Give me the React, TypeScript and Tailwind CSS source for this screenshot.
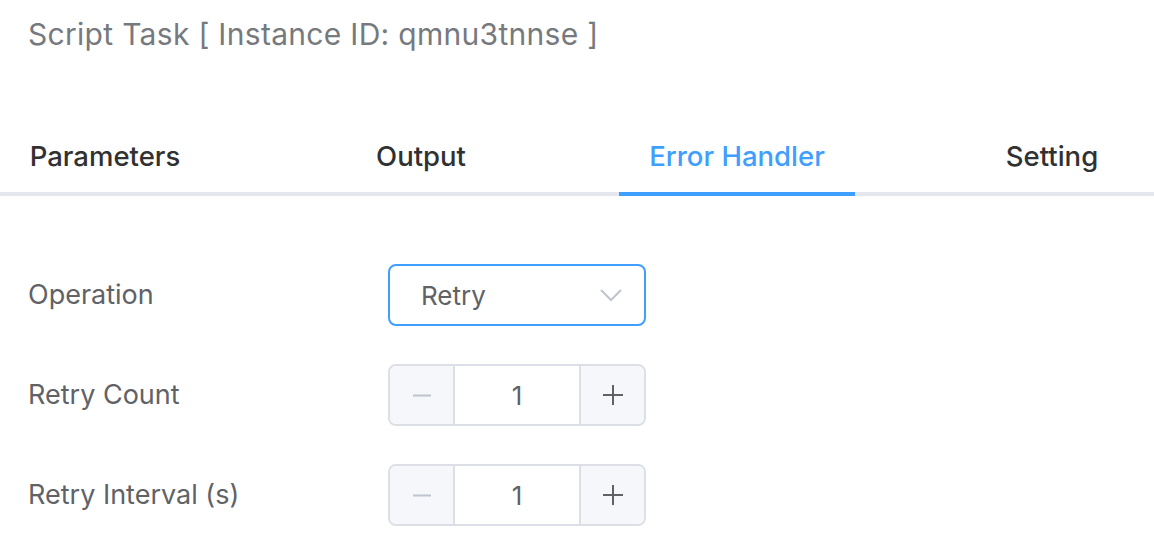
import React from "react";

const font = { fontFamily: "Inter, 'Noto Sans', sans-serif" };

function Tabs() {
  const tabs = [
    { label: "Parameters", w: "w-[210px]", ml: "ml-0" },
    { label: "Output", w: "w-[236px]", ml: "ml-[93px]" },
    { label: "Error Handler", w: "w-[236px]", ml: "ml-[80px]", active: true },
    { label: "Setting", w: "w-[204px]", ml: "ml-[95px]" },
  ];
  return (
    <div className="flex border-b-4 border-[#e4e7ed]">
      {tabs.map((t) => (
        <div
          key={t.label}
          className={`${t.w} ${t.ml} relative flex h-[70px] items-center justify-center text-[27.5px] font-medium ${
            t.active ? "text-[#409eff]" : "text-[#303133]"
          }`}
        >
          {t.label}
          {t.active && <div className="absolute -bottom-[4px] left-0 right-0 h-[4px] bg-[#409eff]" />}
        </div>
      ))}
    </div>
  );
}

function NumberInput() {
  return (
    <div className="flex h-[62px] w-[258px] overflow-hidden rounded-[8px] border-2 border-[#dcdfe6]">
      <div className="flex w-[65px] items-center justify-center border-r-2 border-[#dcdfe6] bg-[#f5f7fa]">
        <svg width="20" height="20" viewBox="0 0 20 20">
          <path d="M1 10.5h18" stroke="#c0c4cc" strokeWidth="2" />
        </svg>
      </div>
      <div className="flex flex-1 items-center justify-center text-[26px] text-[#606266]">1</div>
      <div className="flex w-[65px] items-center justify-center border-l-2 border-[#dcdfe6] bg-[#f5f7fa]">
        <svg width="22" height="22" viewBox="0 0 22 22">
          <path d="M1 11h20M11 1v20" stroke="#606266" strokeWidth="2" />
        </svg>
      </div>
    </div>
  );
}

function Row({ label, children }: { label: string; children: React.ReactNode }) {
  return (
    <div className="flex h-[62px] items-center">
      <div className="w-[388px] pl-[28px] text-[27px] text-[#606266]">{label}</div>
      {children}
    </div>
  );
}

export default function App() {
  return (
    <div className="h-[544px] w-[1154px] overflow-hidden bg-white" style={font}>
      <div className="pl-[28px] pt-[14px] text-[30px] leading-[40px] tracking-[0.3px] text-[#76797e]">
        Script Task [ Instance ID: qmnu3tnnse ]
      </div>
      <div className="mt-[68px]">
        <Tabs />
      </div>
      <div className="mt-[68px] flex flex-col gap-[38px]">
        <Row label="Operation">
          <div className="flex h-[62px] w-[258px] items-center justify-between rounded-[8px] border-2 border-[#409eff] pl-[31px] pr-[22px]">
            <span className="text-[26px] text-[#606266]">Retry</span>
            <svg width="22" height="13" viewBox="0 0 22 13">
              <path d="M1 1l10 10 10-10" fill="none" stroke="#c0c4cc" strokeWidth="2" />
            </svg>
          </div>
        </Row>
        <Row label="Retry Count">
          <NumberInput />
        </Row>
        <Row label="Retry Interval (s)">
          <NumberInput />
        </Row>
      </div>
    </div>
  );
}
